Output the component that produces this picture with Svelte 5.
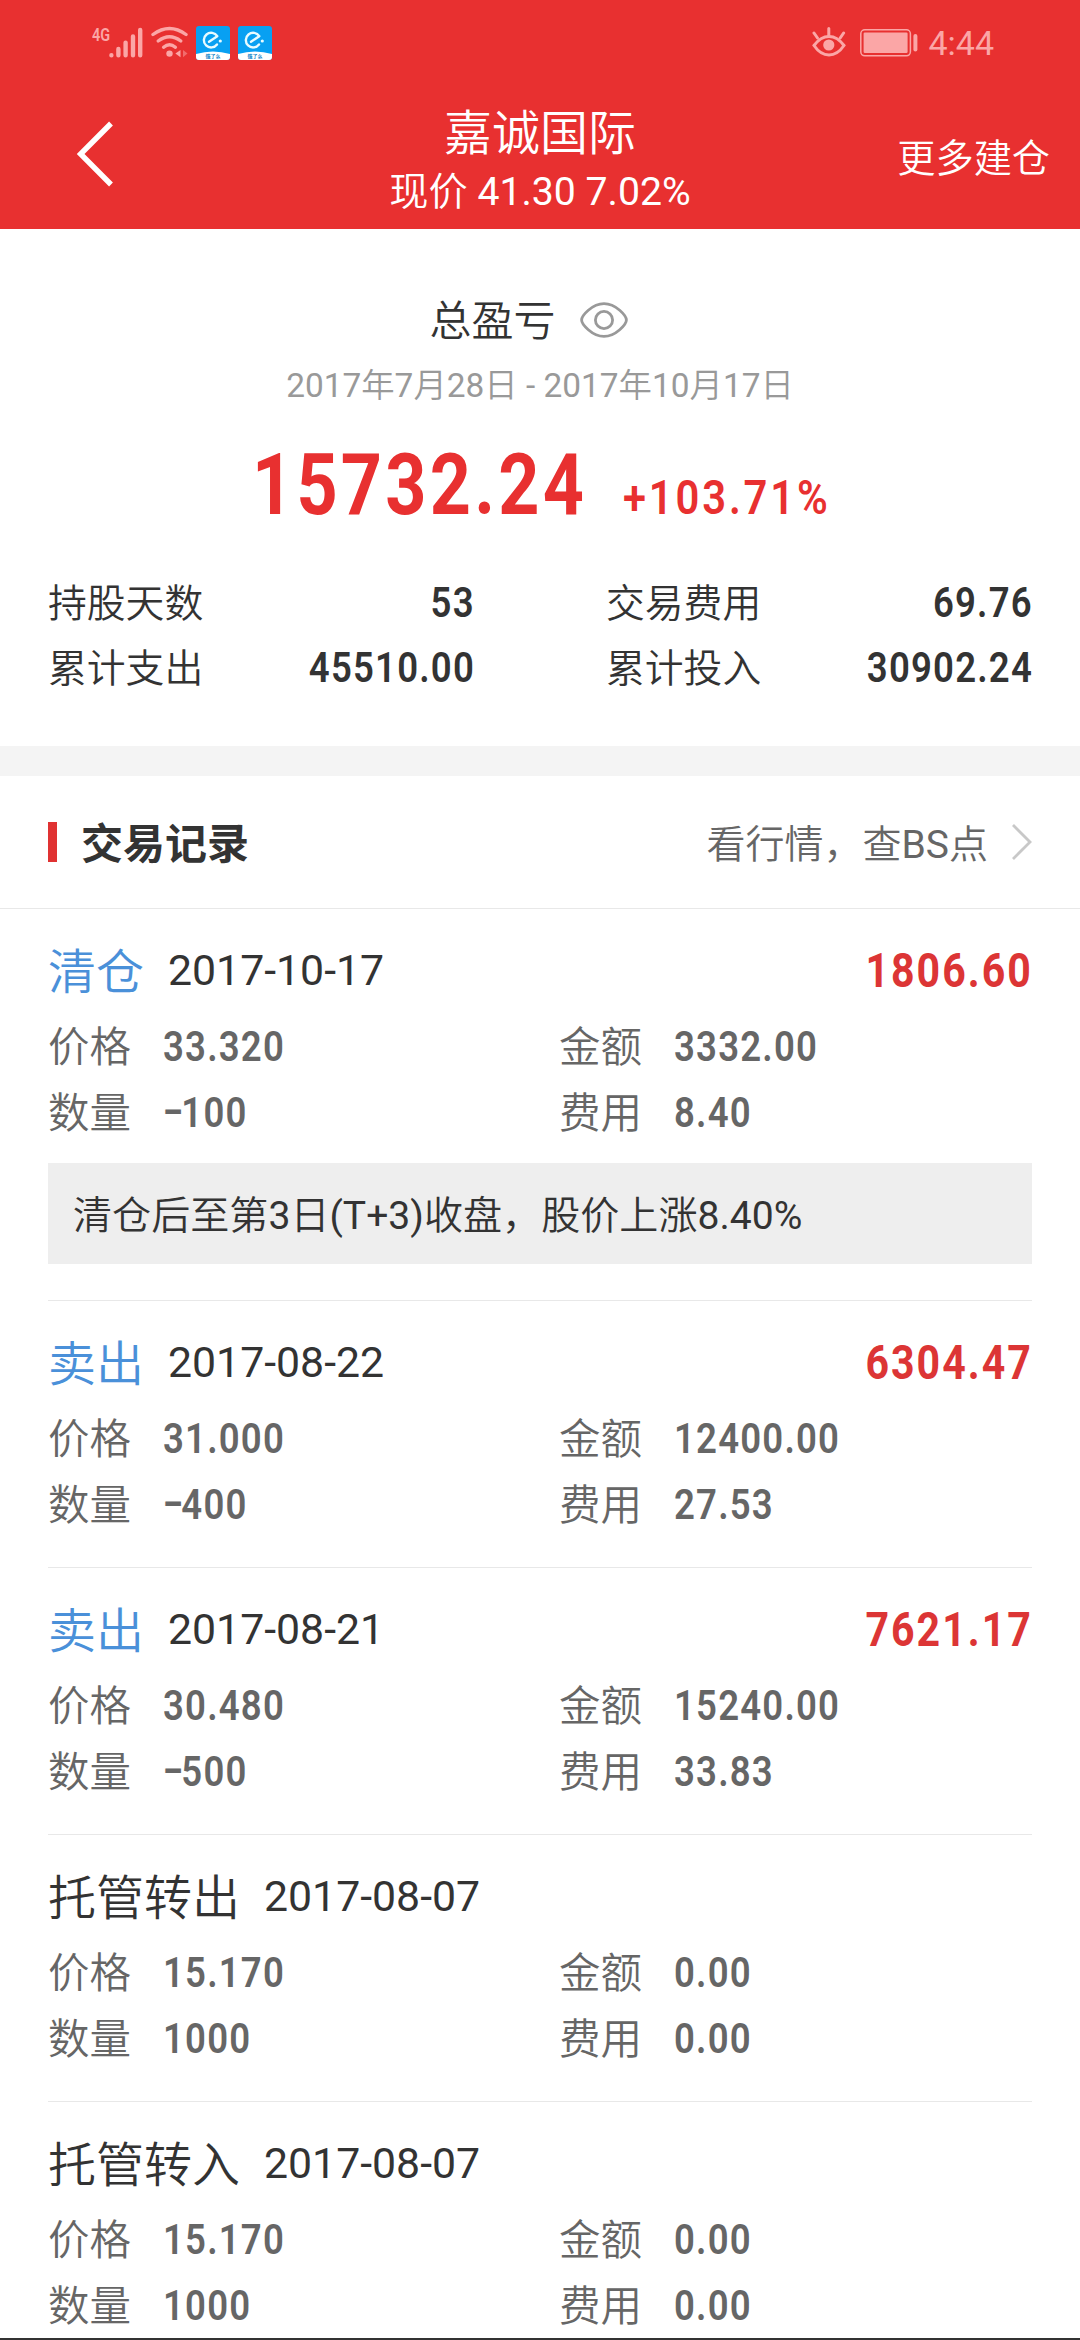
<script>
  const stats = [
    { label: '持股天数', value: '53' },
    { label: '交易费用', value: '69.76' },
    { label: '累计支出', value: '45510.00' },
    { label: '累计投入', value: '30902.24' }
  ];

  const records = [
    { type: '清仓', trade: true, date: '2017-10-17', profit: '1806.60', price: '33.320', amount: '3332.00', qty: '-100', fee: '8.40', note: '清仓后至第3日(T+3)收盘，股价上涨8.40%' },
    { type: '卖出', trade: true, date: '2017-08-22', profit: '6304.47', price: '31.000', amount: '12400.00', qty: '-400', fee: '27.53' },
    { type: '卖出', trade: true, date: '2017-08-21', profit: '7621.17', price: '30.480', amount: '15240.00', qty: '-500', fee: '33.83' },
    { type: '托管转出', date: '2017-08-07', price: '15.170', amount: '0.00', qty: '1000', fee: '0.00' },
    { type: '托管转入', date: '2017-08-07', price: '15.170', amount: '0.00', qty: '1000', fee: '0.00' }
  ];

  // Splits a string into Latin and Chinese runs so each can carry its own weight.
  const runs = (text) => text.match(/[\x20-\x7e]+|[^\x20-\x7e]+/g);
  const isLatin = (run) => run.charCodeAt(0) < 128;
</script>

{#snippet mixed(text)}{#each runs(text) as run}<span class="run" class:cjk={!isLatin(run)}>{run}</span>{/each}{/snippet}

{#snippet appBadge()}
  <svg class="badge" viewBox="0 0 34 34">
    <defs><clipPath id="badgeClip"><rect width="34" height="34" rx="3" /></clipPath></defs>
    <g clip-path="url(#badgeClip)">
      <rect width="34" height="34" fill="#08a0f2" />
      <path d="M0 28Q17 23 34 28V34H0Z" fill="#fff" />
    </g>
    <path d="M13 15.8L21.3 10.2A7.3 7.3 0 1 0 21 18.5" fill="none" stroke="#e8fbff" stroke-width="2.4" stroke-linecap="round" stroke-linejoin="round" />
    <circle cx="24.3" cy="15" r="1.6" fill="#e8fbff" />
    <text x="17" y="32.2" text-anchor="middle" font-size="5" font-weight="700" fill="#0a7fc8">饿了么</text>
  </svg>
{/snippet}

<div class="screen">
  <header>
    <div class="status">
      <div class="status-left">
        <span class="net">4G</span>
        <svg class="signal" viewBox="0 0 35 34">
          <path d="M2.4 29.2V29.3M9.4 23V29.2M16.6 16.6V29.2M24 10.4V29.2M31.2 4V29.2" stroke="#fba6a6" stroke-width="4.4" stroke-linecap="round" />
        </svg>
        <svg class="wifi" viewBox="0 0 38 34">
          <g fill="none" stroke="#fba6a6" stroke-width="3.4" stroke-linecap="round">
            <path d="M2 8.5Q18.5-3.5 35 8.5" />
            <path d="M7.2 15Q18.5 6.5 29.8 15" />
            <path d="M12.6 21.2Q18.5 16.2 24.4 21.2" />
          </g>
          <circle cx="18.5" cy="27.6" r="3.2" fill="#fba6a6" />
          <path d="M29.5 24V31.2L24.4 27.6Z" fill="#fba6a6" />
          <path d="M32 24V31.2L36.5 27.6Z" fill="#f16c6c" />
        </svg>
        {@render appBadge()}
        {@render appBadge()}
      </div>
      <div class="status-right">
        <svg class="care" viewBox="0 0 34 32" fill="none" stroke="#fba6a6" stroke-width="3" stroke-linecap="round">
          <path d="M2 19.5Q8.5 10.5 17 10.5T32 19.5Q25.5 29 17 29T2 19.5Z" />
          <path d="M16.8 2.5V10M2 7L5.5 12M31.6 7L28.2 12" />
          <circle cx="16.8" cy="19" r="5.6" fill="#fba6a6" stroke="none" />
        </svg>
        <svg class="battery" viewBox="0 0 58 28">
          <rect x="0.8" y="0.8" width="49.6" height="26" rx="4" fill="none" stroke="#fba6a6" stroke-width="1.5" />
          <rect x="3.6" y="3.6" width="44" height="20.4" rx="1.2" fill="#fba6a6" />
          <rect x="53.4" y="5" width="4" height="17.6" rx="2" fill="#fba6a6" />
        </svg>
        <span class="clock">4:44</span>
      </div>
    </div>
    <nav>
      <svg class="back" viewBox="0 0 40 68" fill="none" stroke="#fff" stroke-width="5.4">
        <path d="M36 3.5L5.6 34L36 64.5" />
      </svg>
      <div class="heading">
        <h1>嘉诚国际</h1>
        <p>{@render mixed('现价 41.30 7.02%')}</p>
      </div>
      <span class="more">更多建仓</span>
    </nav>
  </header>

  <section class="summary">
    <div class="caption">
      <span>总盈亏</span>
      <svg class="eye" viewBox="0 0 48 36" fill="none" stroke="#999" stroke-width="2.8">
        <path d="M1.6 18C1.6 14 12 1.6 24 1.6S46.4 14 46.4 18S36 34.4 24 34.4S1.6 22 1.6 18Z" />
        <circle cx="24" cy="18" r="8.6" />
      </svg>
    </div>
    <p class="range">{@render mixed('2017年7月28日 - 2017年10月17日')}</p>
    <div class="total">
      <span class="num big">15732.24</span>
      <span class="num pct">+103.71%</span>
    </div>
    <div class="stats">
      {#each stats as s}
        <div class="stat"><span class="label">{s.label}</span><span class="num end">{s.value}</span></div>
      {/each}
    </div>
  </section>

  <section class="log">
    <div class="log-head">
      <i></i>
      <h2>交易记录</h2>
      <span class="link">{@render mixed('看行情，查BS点')}</span>
      <svg class="go" viewBox="0 0 22 38" fill="none" stroke="#c8c8c8" stroke-width="2.8">
        <path d="M2 2L19 19L2 36" />
      </svg>
    </div>
    {#each records as r}
      <article>
        <div class="row-title">
          <span class="type label" class:trade={r.trade}>{r.type}</span>
          <span class="date">{r.date}</span>
          {#if r.profit}<span class="num end profit">{r.profit}</span>{/if}
        </div>
        <div class="details">
          <span class="label">价格</span><span class="num">{r.price}</span>
          <span class="label">金额</span><span class="num">{r.amount}</span>
          <span class="label">数量</span>
          <span class="num">{#if r.qty.startsWith('-')}<span class="minus">–</span>{r.qty.slice(1)}{:else}{r.qty}{/if}</span>
          <span class="label">费用</span><span class="num">{r.fee}</span>
        </div>
        {#if r.note}<div class="note">{@render mixed(r.note)}</div>{/if}
      </article>
    {/each}
  </section>
  <div class="edge"></div>
</div>

<style>
  :global(body) { background: #fff; }
  .screen {
    position: relative;
    width: 1080px;
    height: 2340px;
    overflow: hidden;
    background: #fff;
    color: #333;
    font-family: Roboto, "Noto Sans CJK SC", sans-serif;
    font-weight: 400;
  }
  h1, h2, p { margin: 0; font-weight: 400; }
  svg { display: block; flex: none; }
  span { white-space: nowrap; }
  .run { white-space: pre; }
  .cjk { font-weight: 350; }
  .label { font-weight: 350; padding-bottom: 5px; }

  .num {
    display: inline-block;
    font-weight: 600;
    font-size: 42px;
    letter-spacing: 0.033em;
    transform: scaleX(0.87);
    transform-origin: left center;
  }
  .num.end { transform-origin: right center; margin-right: -1px; }
  .minus { display: inline-block; margin-right: -7px; transform: scaleX(0.85); transform-origin: left center; }

  header { height: 229px; background: #e83030; color: #fff; }
  .status {
    height: 84px;
    box-sizing: border-box;
    padding: 0 86px 0 92px;
    display: flex;
    justify-content: space-between;
  }
  .status-left, .status-right { display: flex; align-items: flex-start; padding-top: 26px; }
  .net {
    width: 17px;
    font-size: 19px;
    line-height: 18px;
    font-weight: 600;
    color: #fba6a6;
    transform: scaleX(0.76);
    transform-origin: left center;
  }
  .signal { width: 35px; height: 34px; }
  .wifi { width: 38px; height: 34px; margin: 0 7px 0 7px; }
  .badge { width: 34px; height: 34px; margin-right: 8px; }
  .care { width: 34px; height: 32px; margin-right: 14px; }
  .battery { width: 58px; height: 28px; margin: 3px 10px 0 0; }
  .clock { font-size: 34px; line-height: 35px; color: #fba6a6; }

  nav { height: 145px; display: grid; grid-template-columns: 1fr auto 1fr; }
  .back { width: 40px; height: 68px; margin: 36px 0 0 75px; }
  .heading { padding-top: 20px; text-align: center; }
  h1 { font-size: 48px; line-height: 60px; font-weight: 350; }
  .heading p { font-size: 39.2px; line-height: 56px; }
  .more { justify-self: end; padding: 46px 30px 0 0; font-size: 38.2px; line-height: 58px; font-weight: 350; }

  .summary { height: 517px; box-sizing: border-box; padding-top: 61px; }
  .caption {
    height: 60px;
    display: flex;
    align-items: center;
    justify-content: center;
    gap: 24px;
    margin-right: 23px;
    font-size: 42px;
    font-weight: 350;
  }
  .caption span { padding-bottom: 5px; }
  .eye { width: 48px; height: 36px; }
  .range { height: 70px; line-height: 71px; text-align: center; font-size: 33.4px; color: #999; }
  .total {
    height: 150px;
    box-sizing: border-box;
    padding: 15px 0 0 252px;
    display: flex;
    align-items: baseline;
    color: #e83030;
  }
  .big { font-size: 86px; line-height: 100px; width: 371px; font-weight: 700; letter-spacing: 0.045em; transform: scaleX(0.835); }
  .pct { font-size: 48px; letter-spacing: 0.068em; }
  .stats {
    display: grid;
    grid-template-columns: 426px 426px;
    column-gap: 132px;
    padding-left: 48px;
  }
  .stat {
    height: 65px;
    display: flex;
    align-items: center;
    justify-content: space-between;
    font-size: 38.8px;
  }

  .log { border-top: 30px solid #f4f4f4; }
  .log-head {
    height: 133px;
    box-sizing: border-box;
    padding: 0 47px 0 48px;
    border-bottom: 1px solid #e8e8e8;
    display: flex;
    align-items: center;
  }
  .log-head i { width: 9px; height: 40px; background: #e03232; }
  h2 { margin: 0 auto 0 24px; padding-bottom: 4px; font-size: 42px; font-weight: 700; }
  .link { padding-bottom: 2px; font-size: 39px; color: #666; }
  .go { width: 22px; height: 38px; margin-left: 23px; }

  article { margin: 0 48px; padding: 18px 0 30px; border-bottom: 1px solid #e8e8e8; }
  article:last-child { border-bottom: 0; }
  .row-title { height: 86px; display: flex; align-items: center; }
  .type { font-size: 48px; }
  .type.trade { color: #4a90d9; }
  .date { margin-left: 24px; font-size: 42.8px; }
  .profit { margin-left: auto; font-size: 48px; color: #dc3535; font-weight: 700; letter-spacing: 0.05em; transform: scaleX(0.855); }
  .details {
    display: grid;
    grid-template-columns: 115px 396px 115px 1fr;
    grid-auto-rows: 66px;
    align-items: center;
    font-size: 41.5px;
    color: #666;
  }
  .note {
    height: 101px;
    margin: 18px 0 6px;
    padding-left: 25px;
    background: #eee;
    line-height: 107px;
    font-size: 39.1px;
    white-space: nowrap;
    box-sizing: border-box;
  }
  .edge { position: absolute; left: 0; right: 0; bottom: 0; height: 2px; background: #333; }
</style>
